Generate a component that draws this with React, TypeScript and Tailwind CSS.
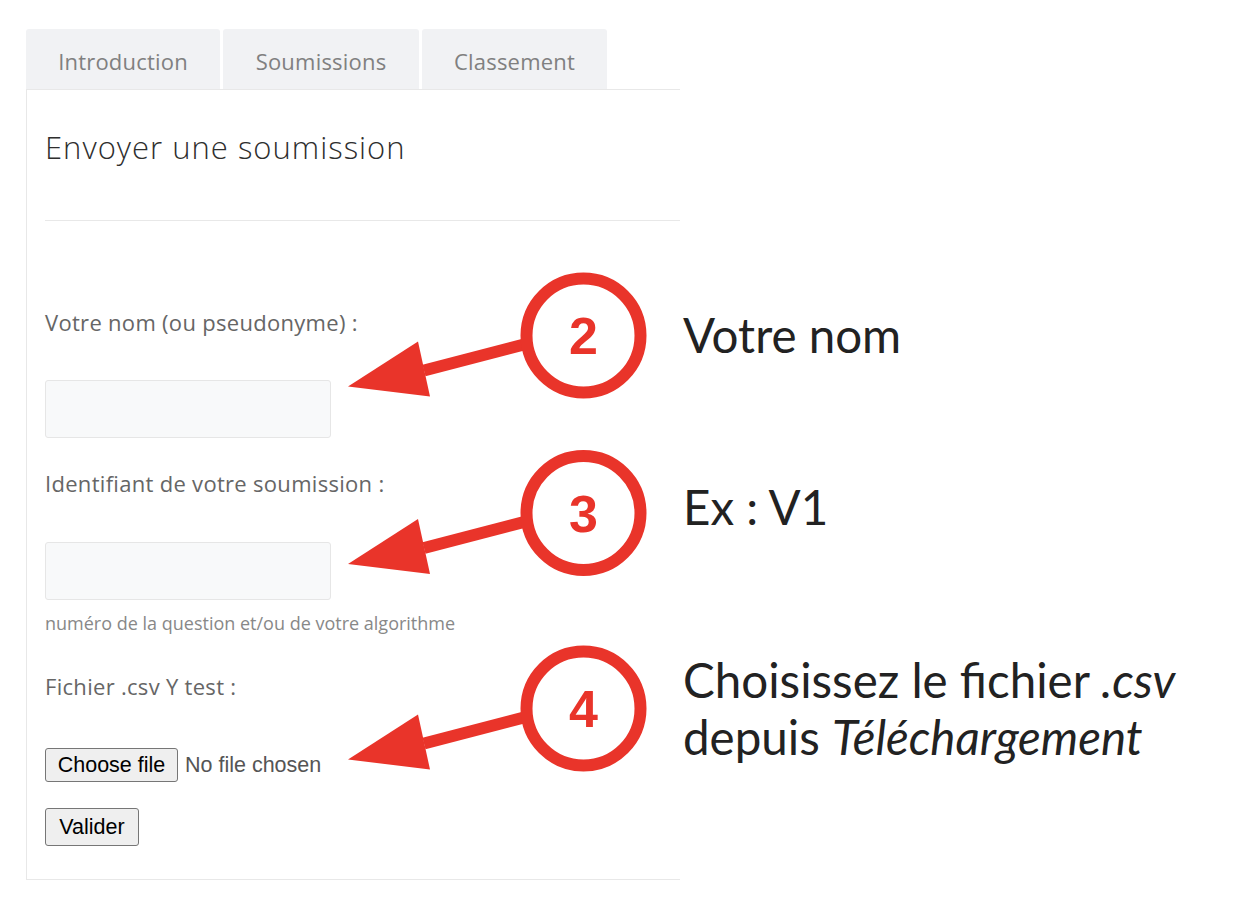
import React from "react";

const RED = "#e9342a";

function Callout({ cy, n }: { cy: number; n: string }) {
  const tipY = cy + 51;
  return (
    <g>
      <line x1={424} y1={cy + 35} x2={524} y2={cy + 9} stroke={RED} strokeWidth={12} />
      <polygon points={`348,${tipY} 418,${cy + 6} 430,${cy + 61}`} fill={RED} />
      <circle cx={583.5} cy={cy} r={57} fill="white" stroke={RED} strokeWidth={12} />
      <text
        x={583.5}
        y={cy + 18.5}
        textAnchor="middle"
        fill={RED}
        fontFamily="'Liberation Sans', Arial, sans-serif"
        fontWeight={700}
        fontSize={52}
      >
        {n}
      </text>
    </g>
  );
}

export default function App() {
  const sans = { fontFamily: "'Open Sans', 'Noto Sans', sans-serif" };
  const native = { fontFamily: "'Liberation Sans', Arial, sans-serif" };
  const lato = { fontFamily: "Lato, sans-serif" };
  return (
    <div className="relative w-[1234px] h-[916px] bg-white overflow-hidden">
      <div className="pt-[29px] pl-[26px] w-[680px]" style={sans}>
        {/* Tabs */}
        <div className="flex gap-[3px] h-[60px]">
          <div className="w-[194px] pt-[4px] flex items-center justify-center bg-[#f1f2f4] rounded-t-[3px] text-[22px] tracking-[0.2px] text-[#808080]">
            Introduction
          </div>
          <div className="w-[196px] pt-[4px] flex items-center justify-center bg-[#f1f2f4] rounded-t-[3px] text-[22px] tracking-[0.2px] text-[#808080]">
            Soumissions
          </div>
          <div className="w-[185px] pt-[4px] flex items-center justify-center bg-[#f1f2f4] rounded-t-[3px] text-[22px] tracking-[0.2px] text-[#808080]">
            Classement
          </div>
        </div>
        {/* Panel */}
        <div className="border-l border-t border-b border-[#e8e8e8] pl-[18px] pt-[39px] pb-[33px]">
          <h2 className="text-[31px] leading-[36px] tracking-[1px] font-light text-[#2e2e2e]">
            Envoyer une soumission
          </h2>
          <div className="mt-[55px] h-px bg-[#e8e8e8]" />
          <div className="mt-[86px] text-[22px] leading-[30px] tracking-[0.3px] text-[#666]">
            Votre nom (ou pseudonyme) :
          </div>
          <div className="mt-[43px] w-[286px] h-[58px] bg-[#f8f9fa] border border-[#e6e6e6] rounded-[3px]" />
          <div className="mt-[30px] text-[22px] leading-[30px] tracking-[0.3px] text-[#666]">
            Identifiant de votre soumission :
          </div>
          <div className="mt-[44px] w-[286px] h-[58px] bg-[#f8f9fa] border border-[#e6e6e6] rounded-[3px]" />
          <div className="mt-[11px] text-[18px] leading-[24px] text-[#888]">
            numéro de la question et/ou de votre algorithme
          </div>
          <div className="mt-[36px] text-[22px] leading-[30px] tracking-[0.3px] text-[#666]">
            Fichier .csv Y test :
          </div>
          <div className="mt-[47px] flex items-center h-[34px]" style={native}>
            <div className="w-[133px] h-[34px] flex items-center justify-center bg-[#efefef] border border-[#767676] rounded-[3px] text-[21.5px] text-black">
              Choose file
            </div>
            <span className="ml-[7px] text-[21.5px] text-[#555]">No file chosen</span>
          </div>
          <div
            className="mt-[26px] w-[94px] h-[38px] flex items-center justify-center bg-[#efefef] border border-[#767676] rounded-[3px] text-[21.5px] text-black"
            style={native}
          >
            Valider
          </div>
        </div>
      </div>

      {/* Annotation overlay */}
      <svg className="absolute left-0 top-0" width={1234} height={916}>
        <Callout cy={335.5} n="2" />
        <Callout cy={513} n="3" />
        <Callout cy={708.5} n="4" />
      </svg>

      <div className="absolute left-[683px] top-[306px] text-[47.5px] leading-[57px] text-[#222]" style={lato}>
        Votre nom
      </div>
      <div className="absolute left-[683px] top-[478px] text-[47.5px] leading-[57px] text-[#222]" style={lato}>
        Ex : V1
      </div>
      <div className="absolute left-[683px] top-[651px] text-[47.5px] leading-[57px] text-[#222]" style={lato}>
        <div>
          Choisissez le fichier <i>.csv</i>
        </div>
        <div>
          depuis <i>Téléchargement</i>
        </div>
      </div>
    </div>
  );
}
